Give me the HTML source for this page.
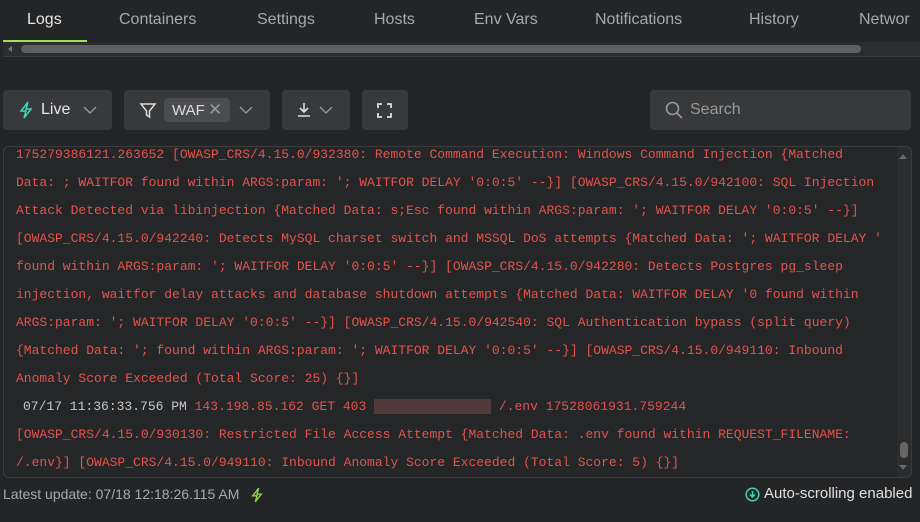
<!DOCTYPE html><html><head><style>
body{margin:0;width:920px;height:522px;background:#242527;font-family:"Liberation Sans",sans-serif;overflow:hidden;position:relative;color:#ddd}
.tab{position:absolute;top:11px;font-size:16px;color:#a8a9ab}
.btn{position:absolute;top:90px;height:40px;background:#38393b;border-radius:4px}
.log{position:absolute;left:3px;top:146px;width:907px;height:330px;border:1px solid #3b3c3e;border-radius:6px;overflow:hidden;background:#252628}
.l{position:absolute;left:12px;font:13px "Liberation Mono",monospace;color:#e5534b;white-space:pre}
</style></head><body>
<div class="tab" style="left:27px;color:#e6e6e6">Logs</div>
<div class="tab" style="left:119px">Containers</div>
<div class="tab" style="left:257px">Settings</div>
<div class="tab" style="left:374px">Hosts</div>
<div class="tab" style="left:474px">Env Vars</div>
<div class="tab" style="left:595px">Notifications</div>
<div class="tab" style="left:749px">History</div>
<div class="tab" style="left:859px">Networ</div>
<div style="position:absolute;left:3px;top:40px;width:84px;height:2px;background:#9be35a"></div>
<div style="position:absolute;left:3px;top:42px;width:917px;height:14px;background:#2c2d2f;border-bottom:1px solid #3a3b3d"></div>
<div style="position:absolute;left:21px;top:45px;width:840px;height:8px;background:#5f6061;border-radius:4px"></div>
<div style="position:absolute;left:8px;top:46px;width:0;height:0;border:3px solid transparent;border-right:4px solid #777;border-left:0"></div>
<div class="btn" style="left:3px;width:109px"><svg style="position:absolute;left:16px;top:11px" width="14" height="18" viewBox="0 0 14 18"><path d="M9 1L2 10h5l-2 7 7-9H7z" fill="none" stroke="#3fd6b8" stroke-width="1.5"/></svg><span style="position:absolute;left:38px;top:11px;font-size:16px;color:#e6e6e6">Live</span><svg style="position:absolute;left:80px;top:16px" width="14" height="8"><path d="M1 1l6 6 6-6" fill="none" stroke="#999" stroke-width="1.4"/></svg></div>
<div class="btn" style="left:124px;width:146px"><svg style="position:absolute;left:15px;top:11px" width="18" height="18"><path d="M2 3h14l-5.5 7v6l-3-2v-4z" fill="none" stroke="#ddd" stroke-width="1.5"/></svg><div style="position:absolute;left:40px;top:8px;width:66px;height:24px;background:#4b4c4e;border-radius:4px"><span style="position:absolute;left:8px;top:4px;font-size:15px;color:#ddd">WAF</span><span style="position:absolute;left:44px;top:2px;font-size:17px;color:#999">✕</span></div><svg style="position:absolute;left:115px;top:16px" width="14" height="8"><path d="M1 1l6 6 6-6" fill="none" stroke="#999" stroke-width="1.4"/></svg></div>
<div class="btn" style="left:282px;width:68px"><svg style="position:absolute;left:14px;top:11px" width="16" height="18"><path d="M8 2v9M4 7l4 4 4-4M2 15h12" fill="none" stroke="#ddd" stroke-width="1.6"/></svg><svg style="position:absolute;left:37px;top:16px" width="14" height="8"><path d="M1 1l6 6 6-6" fill="none" stroke="#999" stroke-width="1.4"/></svg></div>
<div class="btn" style="left:362px;width:46px"><svg style="position:absolute;left:15px;top:13px" width="15" height="15"><path d="M1 5V1h4M10 1h4v4M14 10v4h-4M5 14H1v-4" fill="none" stroke="#ddd" stroke-width="1.8"/></svg></div>
<div class="btn" style="left:650px;width:261px"><svg style="position:absolute;left:15px;top:11px" width="18" height="18"><circle cx="7.5" cy="7.5" r="6" fill="none" stroke="#999" stroke-width="1.6"/><path d="M12 12l5 5" stroke="#999" stroke-width="1.6"/></svg><span style="position:absolute;left:40px;top:11px;font-size:16px;color:#999">Search</span></div>
<div class="log">
<div class="l" style="top:0px">175279386121.263652 [OWASP_CRS/4.15.0/932380: Remote Command Execution: Windows Command Injection {Matched</div>
<div class="l" style="top:28px">Data: ; WAITFOR found within ARGS:param: '; WAITFOR DELAY '0:0:5' --}] [OWASP_CRS/4.15.0/942100: SQL Injection</div>
<div class="l" style="top:56px">Attack Detected via libinjection {Matched Data: s;Esc found within ARGS:param: '; WAITFOR DELAY '0:0:5' --}]</div>
<div class="l" style="top:84px">[OWASP_CRS/4.15.0/942240: Detects MySQL charset switch and MSSQL DoS attempts {Matched Data: '; WAITFOR DELAY '</div>
<div class="l" style="top:112px">found within ARGS:param: '; WAITFOR DELAY '0:0:5' --}] [OWASP_CRS/4.15.0/942280: Detects Postgres pg_sleep</div>
<div class="l" style="top:140px">injection, waitfor delay attacks and database shutdown attempts {Matched Data: WAITFOR DELAY '0 found within</div>
<div class="l" style="top:168px">ARGS:param: '; WAITFOR DELAY '0:0:5' --}] [OWASP_CRS/4.15.0/942540: SQL Authentication bypass (split query)</div>
<div class="l" style="top:196px">{Matched Data: '; found within ARGS:param: '; WAITFOR DELAY '0:0:5' --}] [OWASP_CRS/4.15.0/949110: Inbound</div>
<div class="l" style="top:224px">Anomaly Score Exceeded (Total Score: 25) {}]</div>
<div class="l" style="top:252px;left:19px"><span style="color:#c8c8c8">07/17 11:36:33.756 PM</span> 143.198.85.162 GET 403 <span style="background:#5e4040;color:transparent;opacity:.8">aaaaaaaaaaaaaaa</span> /.env 17528061931.759244</div>
<div class="l" style="top:280px">[OWASP_CRS/4.15.0/930130: Restricted File Access Attempt {Matched Data: .env found within REQUEST_FILENAME:</div>
<div class="l" style="top:308px">/.env}] [OWASP_CRS/4.15.0/949110: Inbound Anomaly Score Exceeded (Total Score: 5) {}]</div>
<div style="position:absolute;right:0;top:0;width:14px;height:330px;background:#2b2c2e"></div>
<div style="position:absolute;right:4px;top:7px;border:4px solid transparent;border-bottom:5px solid #666;border-top:0"></div>
<div style="position:absolute;right:3px;top:295px;width:8px;height:16px;background:#666;border-radius:4px"></div>
<div style="position:absolute;right:4px;top:318px;border:4px solid transparent;border-top:5px solid #666;border-bottom:0"></div>
</div>
<div style="position:absolute;left:3px;top:486px;font-size:14px;color:#a8a9ab">Latest update: 07/18 12:18:26.115 AM</div>
<svg style="position:absolute;left:251px;top:487px" width="12" height="16" viewBox="0 0 14 18"><path d="M9 1L2 10h5l-2 7 7-9H7z" fill="none" stroke="#8fd14f" stroke-width="1.6"/></svg>
<svg style="position:absolute;left:745px;top:487px" width="15" height="15"><circle cx="7.5" cy="7.5" r="6.3" fill="none" stroke="#3fd6b8" stroke-width="1.5"/><path d="M7.5 4v6M5 7.5l2.5 2.5 2.5-2.5" fill="none" stroke="#3fd6b8" stroke-width="1.5"/></svg>
<div style="position:absolute;left:764px;top:485px;font-size:15px;color:#e0e0e0">Auto-scrolling enabled</div>
</body></html>
